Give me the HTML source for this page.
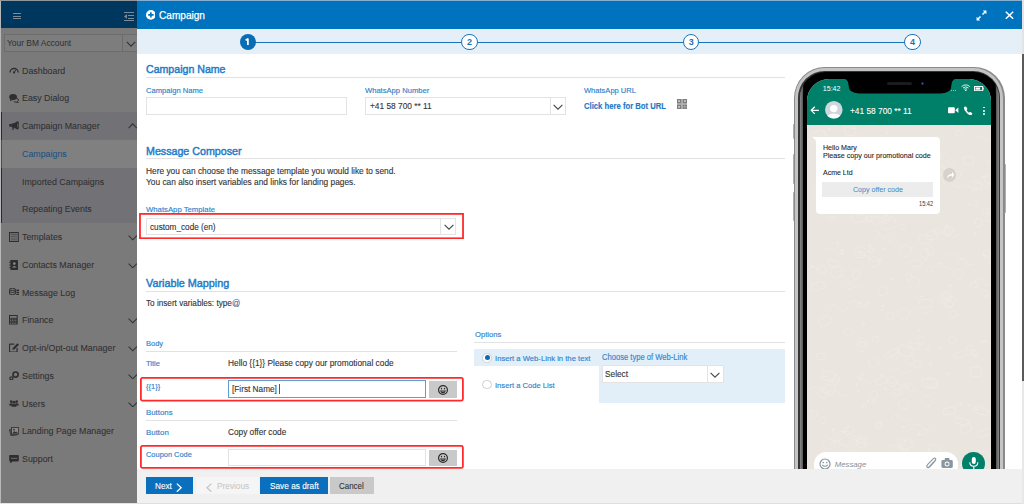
<!DOCTYPE html>
<html><head><meta charset="utf-8"><style>
html,body{margin:0;padding:0;width:1024px;height:504px;overflow:hidden;background:#fff}
.a{position:absolute;display:block}
.t{position:absolute;line-height:1;white-space:pre;font-family:"Liberation Sans",sans-serif}
</style></head><body>
<div class="a" style="left:0.00px;top:0.00px;width:1024.00px;height:504.00px;background:#ffffff"></div>
<div class="a" style="left:0.00px;top:0.00px;width:137.00px;height:504.00px;background:#7a7a7b"></div>
<div class="a" style="left:0.00px;top:1.00px;width:137.00px;height:27.30px;background:#00375e"></div>
<div class="a" style="left:13.00px;top:13.00px;width:8.00px;height:1.30px;background:#7b8a99"></div>
<div class="a" style="left:13.00px;top:15.60px;width:8.00px;height:1.30px;background:#7b8a99"></div>
<div class="a" style="left:13.00px;top:18.20px;width:8.00px;height:1.30px;background:#7b8a99"></div>
<div class="a" style="left:124.20px;top:12.00px;width:9.40px;height:1.20px;background:#7b8a99"></div>
<div class="a" style="left:127.50px;top:15.00px;width:6.10px;height:1.10px;background:#7b8a99"></div>
<div class="a" style="left:127.50px;top:17.50px;width:6.10px;height:1.10px;background:#7b8a99"></div>
<div class="a" style="left:124.20px;top:20.00px;width:9.40px;height:1.20px;background:#7b8a99"></div>
<svg class="a" style="left:123.80px;top:14.40px;" width="3.00" height="4.80" viewBox="0 0 3.00 4.80"><path d="M3 0 L0 2.4 L3 4.8 Z" fill="#7b8a99"/></svg>
<div class="a" style="left:3.60px;top:33.70px;width:136.40px;height:17.90px;background:#7d7d7e;border:1px solid #6c6c6d;box-sizing:border-box"></div>
<div class="a" style="left:122.00px;top:33.70px;width:1.00px;height:17.90px;background:#6c6c6d"></div>
<div class="t" style="left:7.10px;top:38.83px;font-size:8.841px;color:#2e2e2e;font-weight:400;transform:scaleX(0.9524);transform-origin:0 0;">Your BM Account</div>
<svg class="a" style="left:125.50px;top:40.50px;" width="10.00" height="6.50" viewBox="0 0 10.00 6.50"><path d="M0.8 0.8 L5 5.2 L9.2 0.8" stroke="#333" stroke-width="1.1" fill="none"/></svg>
<svg class="a" style="left:8.60px;top:67.40px;" width="10.00" height="6.60" viewBox="0 0 10.00 6.60"><path d="M1.0 5.6 A4.1 4.1 0 0 1 9.2 5.6" stroke="#2e2e30" stroke-width="1.3" fill="none"/><circle cx="5.1" cy="5.4" r="1.1" fill="#2e2e30"/><path d="M5.1 5.4 L6.9 3.0" stroke="#2e2e30" stroke-width="1"/></svg>
<div class="t" style="left:21.80px;top:66.60px;font-size:9.293px;color:#2f2f30;font-weight:400;transform:scaleX(0.9524);transform-origin:0 0;-webkit-text-stroke:0.06px #2f2f30">Dashboard</div>
<svg class="a" style="left:8.80px;top:94.00px;" width="10.40" height="8.60" viewBox="0 0 10.40 8.60"><path d="M7.4 4.2 Q9.4 4.6 9.4 6.2 Q9.4 7.3 8.5 7.7 L9.3 8.4 L7.0 8.1 Q5.6 8.2 4.8 7.4" fill="none" stroke="#2e2e30" stroke-width="1.0"/><ellipse cx="4.1" cy="3.1" rx="3.9" ry="3.0" fill="#2e2e30"/><path d="M1.4 5.0 L0.9 7.2 L3.6 5.9 Z" fill="#2e2e30"/></svg>
<div class="t" style="left:21.80px;top:93.60px;font-size:9.293px;color:#2f2f30;font-weight:400;transform:scaleX(0.9524);transform-origin:0 0;-webkit-text-stroke:0.06px #2f2f30">Easy Dialog</div>
<div class="a" style="left:0.00px;top:112.40px;width:137.00px;height:27.75px;background:#727276"></div>
<svg class="a" style="left:8.60px;top:121.00px;" width="10.40" height="9.20" viewBox="0 0 10.40 9.20"><rect x="0.2" y="3.0" width="2.0" height="2.6" fill="#2e2e30"/><path d="M2.2 2.7 Q5.5 2.2 8.2 0.5 V8.3 Q5.5 6.6 2.2 6.0 Z" fill="#2e2e30"/><ellipse cx="8.6" cy="4.4" rx="1.6" ry="4.1" fill="#2e2e30"/><ellipse cx="8.9" cy="4.4" rx="0.7" ry="2.6" fill="#55555a"/><path d="M3.3 6.0 L4.9 6.4 L4.5 9.0 L3.4 9.0 Z" fill="#2e2e30"/></svg>
<div class="t" style="left:21.80px;top:121.60px;font-size:9.293px;color:#2f2f30;font-weight:400;transform:scaleX(0.9524);transform-origin:0 0;-webkit-text-stroke:0.06px #2f2f30">Campaign Manager</div>
<svg class="a" style="left:127.50px;top:122.70px;" width="9.50" height="6.00" viewBox="0 0 9.50 6.00"><path d="M0.6 5.2 L4.75 0.9 L8.9 5.2" stroke="#333" stroke-width="1.1" fill="none"/></svg>
<div class="a" style="left:0.00px;top:140.15px;width:137.00px;height:27.75px;background:#808080"></div>
<div class="t" style="left:21.80px;top:149.60px;font-size:9.293px;color:#1b5283;font-weight:400;transform:scaleX(0.9524);transform-origin:0 0;-webkit-text-stroke:0.06px #1b5283">Campaigns</div>
<div class="a" style="left:0.00px;top:167.90px;width:137.00px;height:27.75px;background:#727276"></div>
<div class="t" style="left:21.80px;top:177.60px;font-size:9.293px;color:#2f2f30;font-weight:400;transform:scaleX(0.9524);transform-origin:0 0;-webkit-text-stroke:0.06px #2f2f30">Imported Campaigns</div>
<div class="a" style="left:0.00px;top:195.65px;width:137.00px;height:27.75px;background:#727276"></div>
<div class="t" style="left:21.80px;top:204.60px;font-size:9.293px;color:#2f2f30;font-weight:400;transform:scaleX(0.9524);transform-origin:0 0;-webkit-text-stroke:0.06px #2f2f30">Repeating Events</div>
<svg class="a" style="left:8.90px;top:232.00px;" width="9.80" height="10.00" viewBox="0 0 9.80 10.00"><rect x="0.5" y="0.5" width="8.8" height="9" fill="none" stroke="#2e2e30" stroke-width="1"/><g fill="#555"><rect x="1.6" y="1.6" width="6.6" height="1.6"/><rect x="1.6" y="3.9" width="6.6" height="1"/><rect x="1.6" y="5.6" width="6.6" height="1"/><rect x="1.6" y="7.3" width="6.6" height="1"/></g></svg>
<div class="t" style="left:21.80px;top:232.60px;font-size:9.293px;color:#2f2f30;font-weight:400;transform:scaleX(0.9524);transform-origin:0 0;-webkit-text-stroke:0.06px #2f2f30">Templates</div>
<svg class="a" style="left:127.50px;top:235.20px;" width="9.50" height="5.50" viewBox="0 0 9.50 5.50"><path d="M0.6 0.6 L4.75 4.8 L8.9 0.6" stroke="#333" stroke-width="1.1" fill="none"/></svg>
<svg class="a" style="left:9.20px;top:259.60px;" width="9.00" height="10.00" viewBox="0 0 9.00 10.00"><rect x="1.4" y="0" width="7.6" height="10" rx="0.6" fill="#2e2e30"/><rect x="0.2" y="1.8" width="2" height="0.9" fill="#2e2e30"/><rect x="0.2" y="4.5" width="2" height="0.9" fill="#2e2e30"/><rect x="0.2" y="7.2" width="2" height="0.9" fill="#2e2e30"/><circle cx="5.3" cy="3.6" r="1.3" fill="#8a8a8a"/><path d="M3 7.6 Q5.3 4.6 7.6 7.6 Z" fill="#8a8a8a"/></svg>
<div class="t" style="left:21.80px;top:260.60px;font-size:9.293px;color:#2f2f30;font-weight:400;transform:scaleX(0.9524);transform-origin:0 0;-webkit-text-stroke:0.06px #2f2f30">Contacts Manager</div>
<svg class="a" style="left:127.50px;top:262.95px;" width="9.50" height="5.50" viewBox="0 0 9.50 5.50"><path d="M0.6 0.6 L4.75 4.8 L8.9 0.6" stroke="#333" stroke-width="1.1" fill="none"/></svg>
<svg class="a" style="left:8.90px;top:288.00px;" width="10.30" height="7.40" viewBox="0 0 10.30 7.40"><ellipse cx="3.4" cy="1.3" rx="3" ry="1.1" fill="none" stroke="#2e2e30" stroke-width="1"/><path d="M0.4 1.3 V5.9 Q3.4 8 6.4 5.9 V1.3 M0.4 3.6 Q3.4 5.6 6.4 3.6" stroke="#2e2e30" stroke-width="1" fill="none"/><g fill="#2e2e30"><rect x="7.4" y="1.6" width="2.8" height="1.4"/><rect x="7.4" y="3.7" width="2.8" height="1.4"/><rect x="7.4" y="5.8" width="2.8" height="1.4"/></g></svg>
<div class="t" style="left:21.80px;top:288.60px;font-size:9.293px;color:#2f2f30;font-weight:400;transform:scaleX(0.9524);transform-origin:0 0;-webkit-text-stroke:0.06px #2f2f30">Message Log</div>
<svg class="a" style="left:9.30px;top:315.30px;" width="8.70" height="9.50" viewBox="0 0 8.70 9.50"><rect x="0" y="0" width="8.7" height="9.5" fill="#2e2e30"/><g fill="#7a7a7b"><rect x="1" y="1" width="6.7" height="1.8"/><rect x="1.00" y="3.60" width="1.1" height="0.8"/><rect x="2.75" y="3.60" width="1.1" height="0.8"/><rect x="4.50" y="3.60" width="1.1" height="0.8"/><rect x="6.25" y="3.60" width="1.1" height="0.8"/><rect x="1.00" y="5.10" width="1.1" height="0.8"/><rect x="2.75" y="5.10" width="1.1" height="0.8"/><rect x="4.50" y="5.10" width="1.1" height="0.8"/><rect x="6.25" y="5.10" width="1.1" height="0.8"/><rect x="1.00" y="6.60" width="1.1" height="0.8"/><rect x="2.75" y="6.60" width="1.1" height="0.8"/><rect x="4.50" y="6.60" width="1.1" height="0.8"/><rect x="6.25" y="6.60" width="1.1" height="0.8"/><rect x="1.00" y="8.10" width="1.1" height="0.8"/><rect x="2.75" y="8.10" width="1.1" height="0.8"/><rect x="4.50" y="8.10" width="1.1" height="0.8"/><rect x="6.25" y="8.10" width="1.1" height="0.8"/></g></svg>
<div class="t" style="left:21.80px;top:315.60px;font-size:9.293px;color:#2f2f30;font-weight:400;transform:scaleX(0.9524);transform-origin:0 0;-webkit-text-stroke:0.06px #2f2f30">Finance</div>
<svg class="a" style="left:127.50px;top:318.45px;" width="9.50" height="5.50" viewBox="0 0 9.50 5.50"><path d="M0.6 0.6 L4.75 4.8 L8.9 0.6" stroke="#333" stroke-width="1.1" fill="none"/></svg>
<svg class="a" style="left:8.90px;top:343.10px;" width="10.00" height="9.20" viewBox="0 0 10.00 9.20"><path d="M5.2 1.2 H1 Q0.5 1.2 0.5 1.7 V8.6 Q0.5 9.1 1 9.1 H7.6 Q8.1 9.1 8.1 8.6 V5" stroke="#2e2e30" stroke-width="1.2" fill="none"/><path d="M3.4 6.8 L3.7 4.9 L8.4 0.2 L10 1.8 L5.3 6.5 Z" fill="#2e2e30"/></svg>
<div class="t" style="left:21.80px;top:343.60px;font-size:9.293px;color:#2f2f30;font-weight:400;transform:scaleX(0.9524);transform-origin:0 0;-webkit-text-stroke:0.06px #2f2f30">Opt-in/Opt-out Manager</div>
<svg class="a" style="left:127.50px;top:346.20px;" width="9.50" height="5.50" viewBox="0 0 9.50 5.50"><path d="M0.6 0.6 L4.75 4.8 L8.9 0.6" stroke="#333" stroke-width="1.1" fill="none"/></svg>
<svg class="a" style="left:8.80px;top:371.20px;" width="10.20" height="9.20" viewBox="0 0 10.20 9.20"><circle cx="6.6" cy="3.6" r="2.6" fill="none" stroke="#2e2e30" stroke-width="1.6"/><circle cx="2.4" cy="7.4" r="1.5" fill="none" stroke="#2e2e30" stroke-width="1.2"/></svg>
<div class="t" style="left:21.80px;top:371.60px;font-size:9.293px;color:#2f2f30;font-weight:400;transform:scaleX(0.9524);transform-origin:0 0;-webkit-text-stroke:0.06px #2f2f30">Settings</div>
<svg class="a" style="left:127.50px;top:373.95px;" width="9.50" height="5.50" viewBox="0 0 9.50 5.50"><path d="M0.6 0.6 L4.75 4.8 L8.9 0.6" stroke="#333" stroke-width="1.1" fill="none"/></svg>
<svg class="a" style="left:9.00px;top:400.20px;" width="9.90" height="6.70" viewBox="0 0 9.90 6.70"><g fill="#2e2e30"><circle cx="2.2" cy="1.6" r="1.3"/><circle cx="7.7" cy="1.6" r="1.3"/><circle cx="4.95" cy="2.2" r="1.5"/><path d="M0 5.4 Q0 3.2 2.2 3.2 Q3.6 3.2 3.8 4 L3.6 5.4 Z"/><path d="M9.9 5.4 Q9.9 3.2 7.7 3.2 Q6.3 3.2 6.1 4 L6.3 5.4 Z"/><path d="M2.4 6.7 Q2.4 4 4.95 4 Q7.5 4 7.5 6.7 Z"/></g></svg>
<div class="t" style="left:21.80px;top:399.60px;font-size:9.293px;color:#2f2f30;font-weight:400;transform:scaleX(0.9524);transform-origin:0 0;-webkit-text-stroke:0.06px #2f2f30">Users</div>
<svg class="a" style="left:127.50px;top:401.70px;" width="9.50" height="5.50" viewBox="0 0 9.50 5.50"><path d="M0.6 0.6 L4.75 4.8 L8.9 0.6" stroke="#333" stroke-width="1.1" fill="none"/></svg>
<svg class="a" style="left:9.00px;top:426.90px;" width="9.90" height="8.90" viewBox="0 0 9.90 8.90"><path d="M0.4 2.8 L6.6 1.5 L8.2 7.8 L2 9 Z" fill="#555" stroke="#2e2e30" stroke-width="0.7"/><rect x="2.6" y="0.4" width="7" height="6.8" fill="#8a8a8a" stroke="#2e2e30" stroke-width="0.8"/><circle cx="5" cy="2.6" r="0.9" fill="#2e2e30"/><path d="M3.2 6.6 L5.4 4 L6.6 5.2 L7.4 4.5 L9 6.6 Z" fill="#2e2e30"/></svg>
<div class="t" style="left:21.80px;top:426.60px;font-size:9.293px;color:#2f2f30;font-weight:400;transform:scaleX(0.9524);transform-origin:0 0;-webkit-text-stroke:0.06px #2f2f30">Landing Page Manager</div>
<svg class="a" style="left:9.00px;top:454.50px;" width="9.90" height="8.70" viewBox="0 0 9.90 8.70"><path d="M0.2 0.8 Q0.2 0 1 0 H9 Q9.8 0 9.8 0.8 V5.6 Q9.8 6.4 9 6.4 H3.6 L1.2 8.6 V6.4 H1 Q0.2 6.4 0.2 5.6 Z" fill="#2e2e30"/><g fill="#8a8a8a"><rect x="2.4" y="2.8" width="1.3" height="1.1"/><rect x="4.4" y="2.8" width="1.3" height="1.1"/><rect x="6.4" y="2.8" width="1.3" height="1.1"/></g></svg>
<div class="t" style="left:21.80px;top:454.60px;font-size:9.293px;color:#2f2f30;font-weight:400;transform:scaleX(0.9524);transform-origin:0 0;-webkit-text-stroke:0.06px #2f2f30">Support</div>
<div class="a" style="left:0.50px;top:112.40px;width:1.00px;height:111.00px;background:#2a2a2b"></div>
<div class="a" style="left:0.50px;top:140.15px;width:1.00px;height:27.75px;background:#1d5a8a"></div>
<div class="a" style="left:0.00px;top:0.00px;width:1.00px;height:504.00px;background:#b8b8b8"></div>
<div class="a" style="left:0.00px;top:503.00px;width:1024.00px;height:1.00px;background:#e3e3e3"></div>
<div class="a" style="left:137.00px;top:1.00px;width:885.00px;height:27.80px;background:#0073bf"></div>
<div class="a" style="left:137.00px;top:0.00px;width:885.00px;height:1.00px;background:#85aed0"></div>
<div class="a" style="left:0.00px;top:0.00px;width:137.00px;height:1.00px;background:#8f969c"></div>
<svg class="a" style="left:145.60px;top:10.10px;" width="9.80" height="9.80" viewBox="0 0 9.80 9.80"><circle cx="4.9" cy="4.9" r="4.9" fill="#fff"/><path d="M4.9 2.2 V7.6 M2.2 4.9 H7.6" stroke="#0073bf" stroke-width="1.6"/></svg>
<div class="t" style="left:158.70px;top:10.55px;font-size:10.403px;color:#ffffff;font-weight:400;transform:scaleX(0.9709);transform-origin:0 0;-webkit-text-stroke:0.25px #fff">Campaign</div>
<svg class="a" style="left:975.50px;top:10.00px;" width="11.50" height="10.50" viewBox="0 0 11.50 10.50"><path d="M6.5 4.5 L9.8 1.2 M1.2 9.8 L4.5 6.5" stroke="#fff" stroke-width="1.5"/><path d="M6.8 0.6 H10.4 V4.2 Z M0.6 6.8 V10.4 H4.2 Z" fill="#fff"/></svg>
<svg class="a" style="left:1005.00px;top:10.80px;" width="9.00" height="8.60" viewBox="0 0 9.00 8.60"><path d="M0.8 0.8 L8.2 7.8 M8.2 0.8 L0.8 7.8" stroke="#fff" stroke-width="1.5"/></svg>
<div class="a" style="left:137.00px;top:28.80px;width:885.00px;height:25.20px;background:#e4eff8"></div>
<div class="a" style="left:248.00px;top:41.50px;width:664.00px;height:1.50px;background:#1a73bb"></div>
<div class="a" style="left:239.50px;top:33.50px;width:16.60px;height:16.60px;background:#0a6cb5;border-radius:50%"></div>
<svg class="a" style="left:244.80px;top:37.60px;" width="5.00" height="7.60" viewBox="0 0 5.00 7.60"><path d="M2.9 0.4 V7.6 M3.4 0.7 L0.6 2.2" stroke="#fff" stroke-width="1.7" fill="none"/></svg>
<div class="a" style="left:461.20px;top:33.50px;width:16.60px;height:16.60px;background:#fff;border:1.5px solid #1a73bb;border-radius:50%;box-sizing:border-box"></div>
<div class="t" style="left:466.30px;top:37.75px;font-size:9.000px;color:#1a73bb;font-weight:700;width:6.4px;text-align:center">2</div>
<div class="a" style="left:682.90px;top:33.50px;width:16.60px;height:16.60px;background:#fff;border:1.5px solid #1a73bb;border-radius:50%;box-sizing:border-box"></div>
<div class="t" style="left:688.00px;top:37.75px;font-size:9.000px;color:#1a73bb;font-weight:700;width:6.4px;text-align:center">3</div>
<div class="a" style="left:904.20px;top:33.50px;width:16.60px;height:16.60px;background:#fff;border:1.5px solid #1a73bb;border-radius:50%;box-sizing:border-box"></div>
<div class="t" style="left:909.30px;top:37.75px;font-size:9.000px;color:#1a73bb;font-weight:700;width:6.4px;text-align:center">4</div>
<div class="t" style="left:145.80px;top:63.85px;font-size:10.800px;color:#1f7cc8;font-weight:400;transform:scaleX(0.9813);transform-origin:0 0;-webkit-text-stroke:0.45px #1f7cc8">Campaign Name</div>
<div class="a" style="left:146.00px;top:77.20px;width:639.30px;height:1.00px;background:#e2e2e2"></div>
<div class="t" style="left:146.00px;top:86.87px;font-size:7.752px;color:#2f83cc;font-weight:400;transform:scaleX(0.9804);transform-origin:0 0;-webkit-text-stroke:0.15px #2f83cc">Campaign Name</div>
<div class="t" style="left:365.00px;top:86.87px;font-size:7.752px;color:#2f83cc;font-weight:400;transform:scaleX(0.9804);transform-origin:0 0;-webkit-text-stroke:0.15px #2f83cc">WhatsApp Number</div>
<div class="t" style="left:584.00px;top:86.90px;font-size:7.701px;color:#2f83cc;font-weight:400;transform:scaleX(0.9804);transform-origin:0 0;-webkit-text-stroke:0.15px #2f83cc">WhatsApp URL</div>
<div class="a" style="left:146.00px;top:97.40px;width:201.00px;height:17.30px;border:1px solid #e3e3e3;box-sizing:border-box"></div>
<div class="a" style="left:365.00px;top:97.40px;width:201.00px;height:17.30px;border:1px solid #e3e3e3;box-sizing:border-box"></div>
<div class="a" style="left:549.50px;top:97.40px;width:1.00px;height:17.30px;background:#e3e3e3"></div>
<svg class="a" style="left:552.50px;top:103.80px;" width="10.00" height="6.20" viewBox="0 0 10.00 6.20"><path d="M0.6 0.8 L5 5.2 L9.4 0.8" stroke="#4a4a4a" stroke-width="1.15" fill="none"/></svg>
<div class="t" style="left:370.00px;top:101.67px;font-size:9.163px;color:#333333;font-weight:400;transform:scaleX(0.9091);transform-origin:0 0;-webkit-text-stroke:0.12px #333">+41 58 700 ** 11</div>
<div class="t" style="left:584.00px;top:100.94px;font-size:9.613px;color:#1a78c8;font-weight:700;transform:scaleX(0.8000);transform-origin:0 0;-webkit-text-stroke:0.15px #1a78c8">Click here for Bot URL</div>
<svg class="a" style="left:677.00px;top:99.00px;" width="10.00" height="10.00" viewBox="0 0 10.00 10.00"><rect x="0" y="0" width="10" height="10" fill="#b4b4b4"/><g fill="#7e7e7e"><rect x="0" y="0" width="4.2" height="4.2"/><rect x="5.8" y="0" width="4.2" height="4.2"/><rect x="0" y="5.8" width="4.2" height="4.2"/><rect x="5.8" y="5.8" width="1.8" height="1.8"/><rect x="8.2" y="8.2" width="1.8" height="1.8"/><rect x="5.8" y="8.2" width="1.8" height="1.8"/><rect x="8.2" y="5.8" width="1.8" height="1.8"/></g><g fill="#c8c8c8"><rect x="1.2" y="1.2" width="1.8" height="1.8"/><rect x="7" y="1.2" width="1.8" height="1.8"/><rect x="1.2" y="7" width="1.8" height="1.8"/></g></svg>
<div class="t" style="left:145.80px;top:145.85px;font-size:10.800px;color:#1f7cc8;font-weight:400;transform:scaleX(0.9884);transform-origin:0 0;-webkit-text-stroke:0.45px #1f7cc8">Message Composer</div>
<div class="a" style="left:146.00px;top:158.30px;width:639.30px;height:1.00px;background:#e2e2e2"></div>
<div class="t" style="left:145.50px;top:166.87px;font-size:8.757px;color:#333333;font-weight:400;transform:scaleX(0.9524);transform-origin:0 0;-webkit-text-stroke:0.12px #333">Here you can choose the message template you would like to send.</div>
<div class="t" style="left:145.50px;top:177.87px;font-size:8.757px;color:#333333;font-weight:400;transform:scaleX(0.9524);transform-origin:0 0;-webkit-text-stroke:0.12px #333">You can also insert variables and links for landing pages.</div>
<div class="t" style="left:146.00px;top:205.80px;font-size:7.905px;color:#2f83cc;font-weight:400;transform:scaleX(0.9804);transform-origin:0 0;-webkit-text-stroke:0.15px #2f83cc">WhatsApp Template</div>
<svg class="a" style="left:139.00px;top:213.00px;" width="325.00" height="26.20" viewBox="0 0 325.00 26.20"><rect x="0.9" y="0.9" width="323.20" height="24.40" rx="0" fill="none" stroke="#ff2b2b" stroke-width="1.8"/></svg>
<div class="a" style="left:146.20px;top:218.10px;width:310.20px;height:17.40px;border:1px solid #e3e3e3;box-sizing:border-box"></div>
<div class="a" style="left:440.40px;top:218.10px;width:1.00px;height:17.40px;background:#e3e3e3"></div>
<svg class="a" style="left:443.50px;top:224.20px;" width="10.00" height="6.30" viewBox="0 0 10.00 6.30"><path d="M0.6 0.8 L5 5.2 L9.4 0.8" stroke="#4a4a4a" stroke-width="1.15" fill="none"/></svg>
<div class="t" style="left:149.60px;top:222.74px;font-size:9.020px;color:#333333;font-weight:400;transform:scaleX(0.9091);transform-origin:0 0;-webkit-text-stroke:0.12px #333">custom_code (en)</div>
<div class="t" style="left:145.80px;top:277.85px;font-size:10.800px;color:#1f7cc8;font-weight:400;transform:scaleX(0.9996);transform-origin:0 0;-webkit-text-stroke:0.45px #1f7cc8">Variable Mapping</div>
<div class="a" style="left:146.00px;top:290.70px;width:639.30px;height:1.00px;background:#e2e2e2"></div>
<div class="t" style="left:146.40px;top:298.83px;font-size:8.845px;color:#333333;font-weight:400;transform:scaleX(0.9259);transform-origin:0 0;-webkit-text-stroke:0.12px #333">To insert variables: type<span style="color:#3b8dd3">@</span></div>
<div class="t" style="left:146.00px;top:339.93px;font-size:7.650px;color:#2f83cc;font-weight:400;transform:scaleX(0.9804);transform-origin:0 0;-webkit-text-stroke:0.15px #2f83cc">Body</div>
<div class="a" style="left:146.00px;top:351.00px;width:310.60px;height:1.00px;background:#e2e2e2"></div>
<div class="t" style="left:146.00px;top:359.93px;font-size:7.650px;color:#2f83cc;font-weight:400;transform:scaleX(0.9804);transform-origin:0 0;-webkit-text-stroke:0.15px #2f83cc">Title</div>
<div class="t" style="left:227.90px;top:358.74px;font-size:9.029px;color:#333333;font-weight:400;transform:scaleX(0.9259);transform-origin:0 0;-webkit-text-stroke:0.12px #333">Hello {{1}} Please copy our promotional code</div>
<svg class="a" style="left:140.40px;top:377.00px;" width="323.80" height="24.50" viewBox="0 0 323.80 24.50"><rect x="0.9" y="0.9" width="322.00" height="22.70" rx="1.5" fill="none" stroke="#ff2b2b" stroke-width="1.8"/></svg>
<div class="t" style="left:146.00px;top:382.93px;font-size:7.650px;color:#2f83cc;font-weight:400;transform:scaleX(0.9804);transform-origin:0 0;-webkit-text-stroke:0.15px #2f83cc">{{1}}</div>
<div class="a" style="left:228.20px;top:380.20px;width:198.30px;height:17.60px;border:1px solid #5b9fd6;box-sizing:border-box"></div>
<div class="t" style="left:231.70px;top:384.79px;font-size:8.921px;color:#333333;font-weight:400;transform:scaleX(0.9259);transform-origin:0 0;-webkit-text-stroke:0.12px #333">[First Name]</div>
<div class="a" style="left:279.00px;top:384.00px;width:1.00px;height:10.00px;background:#5a5a5a"></div>
<div class="a" style="left:428.50px;top:380.50px;width:28.40px;height:17.50px;background:#c9c9c9"></div>
<svg class="a" style="left:436.80px;top:384.00px;" width="12.00" height="12.00" viewBox="0 0 12.00 12.00"><circle cx="6" cy="6" r="4.4" fill="none" stroke="#2a2a2a" stroke-width="1.2"/><ellipse cx="4.5" cy="4.6" rx="0.65" ry="0.95" fill="#2a2a2a"/><ellipse cx="7.5" cy="4.6" rx="0.65" ry="0.95" fill="#2a2a2a"/><path d="M3.2 6.2 Q6 6.8 8.8 6.2 Q8.4 9.2 6 9.2 Q3.6 9.2 3.2 6.2 Z" fill="#2a2a2a"/><path d="M4.2 6.7 Q6 7.1 7.8 6.7 L7.6 7.3 Q6 7.6 4.4 7.3 Z" fill="#c9c9c9"/></svg>
<div class="t" style="left:146.00px;top:408.74px;font-size:8.027px;color:#2f83cc;font-weight:400;transform:scaleX(0.9804);transform-origin:0 0;-webkit-text-stroke:0.15px #2f83cc">Buttons</div>
<div class="a" style="left:146.00px;top:420.00px;width:310.90px;height:1.00px;background:#e2e2e2"></div>
<div class="t" style="left:146.00px;top:428.72px;font-size:8.058px;color:#2f83cc;font-weight:400;transform:scaleX(0.9804);transform-origin:0 0;-webkit-text-stroke:0.15px #2f83cc">Button</div>
<div class="t" style="left:227.90px;top:427.77px;font-size:8.953px;color:#333333;font-weight:400;transform:scaleX(0.9259);transform-origin:0 0;-webkit-text-stroke:0.12px #333">Copy offer code</div>
<svg class="a" style="left:140.40px;top:445.20px;" width="323.80" height="23.80" viewBox="0 0 323.80 23.80"><rect x="0.9" y="0.9" width="322.00" height="22.00" rx="1.5" fill="none" stroke="#ff2b2b" stroke-width="1.8"/></svg>
<div class="t" style="left:146.00px;top:450.95px;font-size:7.599px;color:#2f83cc;font-weight:400;transform:scaleX(0.9804);transform-origin:0 0;-webkit-text-stroke:0.15px #2f83cc">Coupon Code</div>
<div class="a" style="left:228.10px;top:449.30px;width:198.40px;height:17.20px;border:1px solid #e3e3e3;box-sizing:border-box"></div>
<div class="a" style="left:428.50px;top:449.70px;width:28.40px;height:16.80px;background:#c9c9c9"></div>
<svg class="a" style="left:436.80px;top:452.40px;" width="12.00" height="12.00" viewBox="0 0 12.00 12.00"><circle cx="6" cy="6" r="4.4" fill="none" stroke="#2a2a2a" stroke-width="1.2"/><ellipse cx="4.5" cy="4.6" rx="0.65" ry="0.95" fill="#2a2a2a"/><ellipse cx="7.5" cy="4.6" rx="0.65" ry="0.95" fill="#2a2a2a"/><path d="M3.2 6.2 Q6 6.8 8.8 6.2 Q8.4 9.2 6 9.2 Q3.6 9.2 3.2 6.2 Z" fill="#2a2a2a"/><path d="M4.2 6.7 Q6 7.1 7.8 6.7 L7.6 7.3 Q6 7.6 4.4 7.3 Z" fill="#c9c9c9"/></svg>
<div class="t" style="left:474.80px;top:330.87px;font-size:7.752px;color:#2f83cc;font-weight:400;transform:scaleX(0.9804);transform-origin:0 0;-webkit-text-stroke:0.15px #2f83cc">Options</div>
<div class="a" style="left:474.30px;top:342.20px;width:310.70px;height:1.00px;background:#e2e2e2"></div>
<div class="a" style="left:474.30px;top:349.00px;width:124.70px;height:17.40px;background:#e3eff8"></div>
<div class="a" style="left:599.00px;top:349.00px;width:186.20px;height:53.80px;background:#e3eff8"></div>
<div class="a" style="left:482.35px;top:353.25px;width:9.30px;height:9.30px;background:#fff;border:1px solid #cfcfcf;border-radius:50%;box-sizing:border-box"></div>
<div class="a" style="left:484.50px;top:355.40px;width:5.00px;height:5.00px;background:#0a6cb5;border-radius:50%"></div>
<div class="t" style="left:494.50px;top:354.83px;font-size:7.834px;color:#2f83cc;font-weight:400;transform:scaleX(0.9804);transform-origin:0 0;-webkit-text-stroke:0.15px #2f83cc">Insert a Web-Link in the text</div>
<div class="a" style="left:482.35px;top:379.95px;width:9.30px;height:9.30px;background:#fff;border:1px solid #cfcfcf;border-radius:50%;box-sizing:border-box"></div>
<div class="t" style="left:494.50px;top:381.86px;font-size:7.783px;color:#2f83cc;font-weight:400;transform:scaleX(0.9804);transform-origin:0 0;-webkit-text-stroke:0.15px #2f83cc">Insert a Code List</div>
<div class="t" style="left:601.70px;top:352.99px;font-size:8.523px;color:#2f83cc;font-weight:400;transform:scaleX(0.8929);transform-origin:0 0;-webkit-text-stroke:0.15px #3b8dd3">Choose type of Web-Link</div>
<div class="a" style="left:601.70px;top:365.30px;width:122.00px;height:17.40px;background:#fff;border:1px solid #e3e3e3;box-sizing:border-box"></div>
<div class="a" style="left:706.50px;top:365.30px;width:1.00px;height:17.40px;background:#e3e3e3"></div>
<svg class="a" style="left:709.50px;top:371.50px;" width="10.00" height="6.00" viewBox="0 0 10.00 6.00"><path d="M0.6 0.8 L5 5.2 L9.4 0.8" stroke="#4a4a4a" stroke-width="1.15" fill="none"/></svg>
<div class="t" style="left:605.40px;top:369.69px;font-size:9.130px;color:#333333;font-weight:400;transform:scaleX(0.9091);transform-origin:0 0;-webkit-text-stroke:0.12px #333">Select</div>
<div class="a" style="left:792.80px;top:123.90px;width:3.20px;height:15.30px;background:linear-gradient(90deg,#bdbdbd,#6d6d6d);border-radius:1px"></div>
<div class="a" style="left:792.80px;top:154.40px;width:3.20px;height:29.20px;background:linear-gradient(90deg,#bdbdbd,#6d6d6d);border-radius:1px"></div>
<div class="a" style="left:792.80px;top:192.00px;width:3.20px;height:29.00px;background:linear-gradient(90deg,#bdbdbd,#6d6d6d);border-radius:1px"></div>
<div class="a" style="left:1002.50px;top:164.00px;width:3.00px;height:48.80px;background:linear-gradient(90deg,#6d6d6d,#bdbdbd);border-radius:1px"></div>
<div class="a" style="left:794.00px;top:66.80px;width:210.60px;height:513.20px;background:#8a8a8a;border-radius:31.00px"></div>
<div class="a" style="left:795.20px;top:68.00px;width:208.20px;height:512.00px;background:#c4c4c4;border-radius:29.80px"></div>
<div class="a" style="left:798.20px;top:71.00px;width:202.20px;height:509.00px;background:#353535;border-radius:26.80px"></div>
<div class="a" style="left:799.60px;top:72.40px;width:199.40px;height:507.60px;background:linear-gradient(90deg,#8a8a8a 0,#555 3px,#000 3.6px,#000 calc(100% - 3.6px),#555 calc(100% - 3px),#8a8a8a 100%);border-radius:25.4px"></div>
<div class="a" style="left:803.00px;top:75.80px;width:192.60px;height:504.20px;background:#000000;border-radius:22.00px"></div>
<div class="a" style="left:807.30px;top:78.70px;width:184.10px;height:501.30px;background:#eae5de;border-radius:22px"></div>
<svg class="a" style="left:807.30px;top:124.80px;" width="184.10" height="344.20" viewBox="0 0 184.10 344.20"><g fill="none" stroke="#efebe5" stroke-width="0.8"><circle cx="59.6" cy="52.0" r="2.3"/><circle cx="98.6" cy="126.2" r="5.6"/><circle cx="39.5" cy="29.7" r="0.9" fill="#efebe5"/><circle cx="12.9" cy="31.3" r="0.9" fill="#efebe5"/><rect x="10.9" y="195.1" width="12.3" height="7.9" rx="2" transform="rotate(-26 10.9 195.1)"/><rect x="107.7" y="17.1" width="6.5" height="9.3" rx="2" transform="rotate(-13 107.7 17.1)"/><path d="M26.5 40.6 q5 -6 10 0 t10 0"/><circle cx="103.1" cy="235.3" r="4.3"/><circle cx="117.6" cy="128.5" r="4.3"/><circle cx="113.9" cy="171.3" r="0.9" fill="#efebe5"/><circle cx="143.0" cy="160.6" r="0.9" fill="#efebe5"/><rect x="66.5" y="85.7" width="13.0" height="6.2" rx="2" transform="rotate(4 66.5 85.7)"/><circle cx="96.6" cy="301.9" r="0.9" fill="#efebe5"/><circle cx="53.0" cy="338.2" r="4.0"/><circle cx="30.4" cy="118.0" r="0.9" fill="#efebe5"/><circle cx="77.6" cy="331.9" r="5.1"/><path d="M105.4 302.0 q5 -6 10 0 t10 0"/><circle cx="62.6" cy="120.8" r="0.9" fill="#efebe5"/><circle cx="106.7" cy="157.4" r="5.8"/><circle cx="87.2" cy="229.1" r="4.9"/><circle cx="57.0" cy="199.4" r="0.9" fill="#efebe5"/><path d="M52.4 133.1 q5 -6 10 0 t10 0"/><rect x="4.2" y="159.3" width="12.1" height="7.5" rx="2" transform="rotate(-17 4.2 159.3)"/><circle cx="52.9" cy="254.7" r="0.9" fill="#efebe5"/><circle cx="71.9" cy="300.6" r="2.7"/><rect x="73.9" y="95.9" width="14.2" height="9.3" rx="2" transform="rotate(-13 73.9 95.9)"/><circle cx="76.4" cy="123.8" r="0.9" fill="#efebe5"/><rect x="176.2" y="52.1" width="7.5" height="8.3" rx="2" transform="rotate(-29 176.2 52.1)"/><path d="M152.9 62.9 q5 -6 10 0 t10 0"/><path d="M0.8 144.5 q5 -6 10 0 t10 0"/><rect x="112.2" y="109.9" width="12.9" height="7.6" rx="2" transform="rotate(7 112.2 109.9)"/><circle cx="124.4" cy="18.6" r="0.9" fill="#efebe5"/><circle cx="73.2" cy="136.0" r="0.9" fill="#efebe5"/><circle cx="116.7" cy="21.5" r="5.9"/><circle cx="81.1" cy="37.9" r="2.4"/><path d="M104.3 185.1 q5 -6 10 0 t10 0"/><rect x="112.9" y="24.3" width="12.1" height="5.7" rx="2" transform="rotate(-15 112.9 24.3)"/><circle cx="63.9" cy="125.6" r="2.5"/><circle cx="89.8" cy="337.3" r="0.9" fill="#efebe5"/><circle cx="89.0" cy="29.6" r="5.0"/><rect x="136.2" y="165.1" width="11.2" height="6.0" rx="2" transform="rotate(27 136.2 165.1)"/><circle cx="66.6" cy="238.1" r="5.0"/><circle cx="54.8" cy="221.8" r="4.8"/><rect x="48.0" y="126.5" width="9.6" height="6.1" rx="2" transform="rotate(2 48.0 126.5)"/><rect x="92.5" y="219.6" width="14.1" height="9.1" rx="2" transform="rotate(14 92.5 219.6)"/><path d="M41.7 178.6 q5 -6 10 0 t10 0"/><path d="M134.5 341.4 q5 -6 10 0 t10 0"/><path d="M86.9 66.8 q5 -6 10 0 t10 0"/><path d="M82.3 323.3 q5 -6 10 0 t10 0"/><rect x="175.7" y="125.8" width="7.0" height="7.4" rx="2" transform="rotate(-10 175.7 125.8)"/><circle cx="88.8" cy="339.9" r="3.9"/><circle cx="120.1" cy="275.9" r="5.3"/><rect x="22.1" y="134.0" width="10.8" height="5.9" rx="2" transform="rotate(17 22.1 134.0)"/><circle cx="61.2" cy="276.3" r="0.9" fill="#efebe5"/><circle cx="85.2" cy="256.5" r="4.9"/><rect x="31.3" y="43.8" width="11.9" height="7.3" rx="2" transform="rotate(9 31.3 43.8)"/><circle cx="112.5" cy="205.6" r="0.9" fill="#efebe5"/><rect x="120.9" y="120.9" width="6.2" height="9.0" rx="2" transform="rotate(14 120.9 120.9)"/><rect x="18.9" y="258.6" width="10.3" height="9.4" rx="2" transform="rotate(20 18.9 258.6)"/><path d="M38.8 86.9 q5 -6 10 0 t10 0"/><path d="M92.2 263.5 q5 -6 10 0 t10 0"/><rect x="47.7" y="144.6" width="6.6" height="8.7" rx="2" transform="rotate(24 47.7 144.6)"/><circle cx="121.9" cy="281.2" r="0.9" fill="#efebe5"/><rect x="152.2" y="303.0" width="11.3" height="7.6" rx="2" transform="rotate(-29 152.2 303.0)"/><circle cx="81.0" cy="63.2" r="5.1"/><circle cx="27.6" cy="48.8" r="4.2"/><circle cx="60.0" cy="178.8" r="0.9" fill="#efebe5"/><circle cx="144.3" cy="36.6" r="3.0"/><circle cx="51.0" cy="266.4" r="0.9" fill="#efebe5"/><circle cx="103.4" cy="262.2" r="3.8"/><rect x="112.7" y="174.4" width="12.9" height="7.3" rx="2" transform="rotate(2 112.7 174.4)"/><path d="M88.0 324.8 q5 -6 10 0 t10 0"/><rect x="169.8" y="308.0" width="14.4" height="5.7" rx="2" transform="rotate(-23 169.8 308.0)"/><rect x="81.3" y="25.0" width="10.3" height="6.1" rx="2" transform="rotate(-12 81.3 25.0)"/><path d="M22.5 268.0 q5 -6 10 0 t10 0"/><circle cx="26.3" cy="304.6" r="0.9" fill="#efebe5"/><circle cx="40.4" cy="328.6" r="0.9" fill="#efebe5"/><rect x="162.8" y="56.2" width="7.6" height="7.2" rx="2" transform="rotate(1 162.8 56.2)"/><path d="M62.4 67.5 q5 -6 10 0 t10 0"/><path d="M17.0 126.3 q5 -6 10 0 t10 0"/><circle cx="101.9" cy="152.0" r="3.5"/><circle cx="95.2" cy="101.9" r="2.5"/><circle cx="169.0" cy="78.9" r="2.3"/><rect x="50.0" y="312.5" width="8.7" height="5.6" rx="2" transform="rotate(-5 50.0 312.5)"/><path d="M167.7 282.5 q5 -6 10 0 t10 0"/><circle cx="74.7" cy="185.1" r="0.9" fill="#efebe5"/><circle cx="128.9" cy="30.9" r="5.2"/><path d="M33.7 308.9 q5 -6 10 0 t10 0"/><path d="M172.7 218.9 q5 -6 10 0 t10 0"/><circle cx="15.4" cy="295.4" r="3.1"/><circle cx="22.4" cy="4.0" r="0.9" fill="#efebe5"/><rect x="170.5" y="92.4" width="6.4" height="8.5" rx="2" transform="rotate(26 170.5 92.4)"/><rect x="178.3" y="90.4" width="8.0" height="6.6" rx="2" transform="rotate(-12 178.3 90.4)"/><rect x="139.7" y="100.0" width="8.7" height="9.0" rx="2" transform="rotate(30 139.7 100.0)"/><rect x="6.8" y="6.4" width="11.1" height="6.2" rx="2" transform="rotate(-3 6.8 6.4)"/><circle cx="121.1" cy="224.3" r="0.9" fill="#efebe5"/><path d="M100.4 306.6 q5 -6 10 0 t10 0"/><path d="M126.5 338.9 q5 -6 10 0 t10 0"/><rect x="36.5" y="304.3" width="10.0" height="6.7" rx="2" transform="rotate(-27 36.5 304.3)"/><path d="M23.9 24.4 q5 -6 10 0 t10 0"/><circle cx="79.3" cy="19.1" r="0.9" fill="#efebe5"/><path d="M160.2 231.3 q5 -6 10 0 t10 0"/><circle cx="110.2" cy="239.0" r="3.8"/><path d="M29.0 153.8 q5 -6 10 0 t10 0"/><path d="M67.0 113.5 q5 -6 10 0 t10 0"/><path d="M45.0 333.2 q5 -6 10 0 t10 0"/><path d="M40.1 63.1 q5 -6 10 0 t10 0"/><rect x="70.2" y="163.8" width="8.5" height="8.9" rx="2" transform="rotate(-25 70.2 163.8)"/><circle cx="150.3" cy="49.6" r="3.6"/><circle cx="55.1" cy="217.2" r="4.3"/><circle cx="97.4" cy="258.9" r="0.9" fill="#efebe5"/><circle cx="140.6" cy="248.6" r="0.9" fill="#efebe5"/><rect x="27.5" y="249.8" width="6.4" height="9.2" rx="2" transform="rotate(24 27.5 249.8)"/><rect x="115.4" y="253.2" width="15.1" height="8.8" rx="2" transform="rotate(4 115.4 253.2)"/><rect x="149.6" y="5.5" width="6.9" height="5.2" rx="2" transform="rotate(8 149.6 5.5)"/><circle cx="176.6" cy="129.9" r="0.9" fill="#efebe5"/><rect x="102.8" y="216.6" width="10.9" height="5.0" rx="2" transform="rotate(18 102.8 216.6)"/><circle cx="137.7" cy="173.5" r="4.6"/><path d="M12.2 254.2 q5 -6 10 0 t10 0"/><rect x="148.9" y="291.9" width="13.3" height="6.0" rx="2" transform="rotate(14 148.9 291.9)"/><circle cx="179.5" cy="170.4" r="0.9" fill="#efebe5"/><path d="M14.1 314.1 q5 -6 10 0 t10 0"/><rect x="141.1" y="212.9" width="6.8" height="5.7" rx="2" transform="rotate(-15 141.1 212.9)"/><rect x="136.8" y="105.0" width="6.1" height="5.3" rx="2" transform="rotate(-14 136.8 105.0)"/><circle cx="123.6" cy="238.8" r="0.9" fill="#efebe5"/><circle cx="53.5" cy="178.2" r="0.9" fill="#efebe5"/><rect x="85.7" y="264.7" width="9.1" height="5.4" rx="2" transform="rotate(-2 85.7 264.7)"/><circle cx="53.3" cy="26.4" r="0.9" fill="#efebe5"/><rect x="182.9" y="133.5" width="6.7" height="5.5" rx="2" transform="rotate(15 182.9 133.5)"/><path d="M48.2 124.0 q5 -6 10 0 t10 0"/><rect x="163.2" y="242.7" width="11.0" height="9.4" rx="2" transform="rotate(-6 163.2 242.7)"/><circle cx="29.3" cy="327.7" r="0.9" fill="#efebe5"/><circle cx="74.6" cy="250.9" r="0.9" fill="#efebe5"/><path d="M63.3 109.0 q5 -6 10 0 t10 0"/><circle cx="0.3" cy="259.0" r="0.9" fill="#efebe5"/><circle cx="22.1" cy="319.6" r="5.6"/><circle cx="53.3" cy="128.4" r="0.9" fill="#efebe5"/><circle cx="71.8" cy="300.1" r="3.4"/><circle cx="78.8" cy="94.9" r="3.1"/><rect x="9.5" y="228.4" width="8.5" height="6.3" rx="2" transform="rotate(1 9.5 228.4)"/><circle cx="34.9" cy="128.8" r="0.9" fill="#efebe5"/><circle cx="162.7" cy="280.1" r="0.9" fill="#efebe5"/><rect x="168.1" y="324.5" width="13.2" height="5.2" rx="2" transform="rotate(14 168.1 324.5)"/><path d="M83.0 259.7 q5 -6 10 0 t10 0"/><rect x="89.3" y="314.6" width="7.7" height="7.1" rx="2" transform="rotate(-13 89.3 314.6)"/><path d="M47.1 254.9 q5 -6 10 0 t10 0"/><circle cx="74.7" cy="82.3" r="0.9" fill="#efebe5"/><rect x="102.5" y="136.1" width="12.4" height="5.4" rx="2" transform="rotate(0 102.5 136.1)"/><circle cx="149.4" cy="189.9" r="0.9" fill="#efebe5"/><circle cx="166.8" cy="343.8" r="0.9" fill="#efebe5"/><rect x="78.6" y="189.0" width="6.9" height="6.7" rx="2" transform="rotate(-25 78.6 189.0)"/><rect x="44.0" y="89.1" width="14.9" height="8.7" rx="2" transform="rotate(-5 44.0 89.1)"/><circle cx="76.2" cy="180.8" r="0.9" fill="#efebe5"/><circle cx="49.7" cy="259.5" r="0.9" fill="#efebe5"/><rect x="51.1" y="333.9" width="12.9" height="7.6" rx="2" transform="rotate(17 51.1 333.9)"/><rect x="156.1" y="31.9" width="9.8" height="8.2" rx="2" transform="rotate(-4 156.1 31.9)"/><circle cx="57.4" cy="280.9" r="2.5"/><circle cx="78.2" cy="263.5" r="0.9" fill="#efebe5"/><circle cx="178.2" cy="169.0" r="3.6"/><circle cx="170.5" cy="284.8" r="0.9" fill="#efebe5"/><circle cx="178.9" cy="85.7" r="2.9"/><circle cx="28.0" cy="335.3" r="5.8"/><circle cx="132.8" cy="223.3" r="0.9" fill="#efebe5"/><circle cx="15.6" cy="268.0" r="5.1"/><path d="M42.8 317.4 q5 -6 10 0 t10 0"/><circle cx="177.1" cy="216.1" r="0.9" fill="#efebe5"/><circle cx="128.5" cy="38.7" r="3.2"/><path d="M173.6 66.1 q5 -6 10 0 t10 0"/><circle cx="41.1" cy="207.4" r="4.1"/><path d="M183.3 96.1 q5 -6 10 0 t10 0"/><circle cx="118.6" cy="304.9" r="0.9" fill="#efebe5"/><circle cx="96.8" cy="188.7" r="5.8"/><circle cx="129.7" cy="106.1" r="2.8"/><circle cx="162.8" cy="223.3" r="3.0"/><rect x="122.8" y="319.2" width="10.9" height="8.5" rx="2" transform="rotate(13 122.8 319.2)"/><circle cx="66.7" cy="136.7" r="5.2"/><rect x="136.0" y="174.2" width="11.0" height="6.0" rx="2" transform="rotate(16 136.0 174.2)"/><path d="M35.7 160.5 q5 -6 10 0 t10 0"/><circle cx="139.9" cy="101.8" r="0.9" fill="#efebe5"/><circle cx="112.3" cy="309.3" r="0.9" fill="#efebe5"/><rect x="76.7" y="229.5" width="15.2" height="5.3" rx="2" transform="rotate(-29 76.7 229.5)"/><circle cx="109.7" cy="143.3" r="2.7"/><path d="M82.7 245.7 q5 -6 10 0 t10 0"/><rect x="134.8" y="344.1" width="9.3" height="5.9" rx="2" transform="rotate(26 134.8 344.1)"/><circle cx="137.3" cy="11.0" r="0.9" fill="#efebe5"/><circle cx="154.4" cy="339.8" r="0.9" fill="#efebe5"/><path d="M31.1 1.0 q5 -6 10 0 t10 0"/><circle cx="14.9" cy="145.0" r="4.2"/><path d="M139.6 131.1 q5 -6 10 0 t10 0"/><circle cx="151.2" cy="149.2" r="4.8"/><circle cx="36.0" cy="186.8" r="0.9" fill="#efebe5"/><circle cx="35.5" cy="125.7" r="0.9" fill="#efebe5"/><circle cx="5.6" cy="141.7" r="0.9" fill="#efebe5"/><circle cx="7.5" cy="12.0" r="5.2"/><circle cx="11.4" cy="67.3" r="5.6"/><circle cx="62.4" cy="93.9" r="3.0"/><path d="M131.9 109.2 q5 -6 10 0 t10 0"/><circle cx="54.7" cy="248.9" r="2.1"/><circle cx="43.0" cy="163.9" r="0.9" fill="#efebe5"/><path d="M175.5 133.3 q5 -6 10 0 t10 0"/><rect x="168.1" y="281.1" width="15.3" height="5.9" rx="2" transform="rotate(18 168.1 281.1)"/><rect x="135.9" y="283.9" width="12.1" height="6.6" rx="2" transform="rotate(-11 135.9 283.9)"/><circle cx="66.6" cy="269.9" r="4.0"/><circle cx="72.1" cy="55.2" r="0.9" fill="#efebe5"/><path d="M11.9 11.7 q5 -6 10 0 t10 0"/><circle cx="29.6" cy="147.2" r="6.0"/><circle cx="48.7" cy="29.0" r="3.7"/><rect x="181.9" y="335.4" width="8.3" height="7.1" rx="2" transform="rotate(7 181.9 335.4)"/><circle cx="124.0" cy="258.1" r="5.1"/><path d="M54.1 96.4 q5 -6 10 0 t10 0"/><rect x="68.6" y="254.6" width="10.4" height="5.9" rx="2" transform="rotate(-16 68.6 254.6)"/><rect x="51.8" y="313.1" width="9.3" height="7.0" rx="2" transform="rotate(30 51.8 313.1)"/><circle cx="93.3" cy="79.8" r="4.6"/><circle cx="182.3" cy="35.3" r="0.9" fill="#efebe5"/><circle cx="162.4" cy="79.7" r="0.9" fill="#efebe5"/><path d="M168.2 13.9 q5 -6 10 0 t10 0"/><rect x="42.9" y="17.4" width="15.3" height="6.9" rx="2" transform="rotate(22 42.9 17.4)"/><circle cx="82.6" cy="89.7" r="2.4"/><rect x="109.7" y="213.9" width="6.4" height="6.7" rx="2" transform="rotate(-27 109.7 213.9)"/><rect x="184.0" y="13.2" width="14.1" height="9.1" rx="2" transform="rotate(-5 184.0 13.2)"/><circle cx="68.4" cy="214.2" r="2.8"/><circle cx="146.3" cy="189.1" r="3.6"/><rect x="146.4" y="229.1" width="12.4" height="5.5" rx="2" transform="rotate(-20 146.4 229.1)"/><path d="M128.0 141.4 q5 -6 10 0 t10 0"/><circle cx="122.9" cy="144.2" r="3.2"/><circle cx="104.2" cy="123.2" r="0.9" fill="#efebe5"/><path d="M3.4 264.5 q5 -6 10 0 t10 0"/><circle cx="118.6" cy="134.8" r="0.9" fill="#efebe5"/><rect x="37.5" y="2.0" width="10.2" height="9.1" rx="2" transform="rotate(-6 37.5 2.0)"/><rect x="162.4" y="159.0" width="7.3" height="5.3" rx="2" transform="rotate(-21 162.4 159.0)"/><path d="M148.4 136.9 q5 -6 10 0 t10 0"/><path d="M135.7 59.2 q5 -6 10 0 t10 0"/><circle cx="52.1" cy="179.8" r="2.4"/><rect x="90.3" y="277.7" width="9.0" height="9.2" rx="2" transform="rotate(-27 90.3 277.7)"/><circle cx="168.0" cy="108.5" r="0.9" fill="#efebe5"/><rect x="15.9" y="245.7" width="12.4" height="9.3" rx="2" transform="rotate(7 15.9 245.7)"/><circle cx="113.1" cy="67.7" r="0.9" fill="#efebe5"/><circle cx="33.7" cy="75.3" r="0.9" fill="#efebe5"/><path d="M172.7 54.0 q5 -6 10 0 t10 0"/><rect x="22.6" y="85.2" width="6.4" height="7.8" rx="2" transform="rotate(15 22.6 85.2)"/><circle cx="7.0" cy="289.2" r="3.6"/><path d="M83.9 292.9 q5 -6 10 0 t10 0"/><rect x="119.4" y="106.3" width="10.3" height="8.3" rx="2" transform="rotate(-3 119.4 106.3)"/><circle cx="80.7" cy="8.1" r="0.9" fill="#efebe5"/><circle cx="85.6" cy="154.2" r="0.9" fill="#efebe5"/><circle cx="153.9" cy="279.6" r="0.9" fill="#efebe5"/><circle cx="19.7" cy="44.3" r="0.9" fill="#efebe5"/><circle cx="67.2" cy="276.8" r="2.2"/><path d="M24.0 318.1 q5 -6 10 0 t10 0"/><circle cx="143.1" cy="176.5" r="5.0"/><rect x="164.7" y="225.2" width="6.3" height="5.3" rx="2" transform="rotate(7 164.7 225.2)"/><rect x="127.4" y="37.8" width="15.8" height="7.5" rx="2" transform="rotate(27 127.4 37.8)"/><rect x="168.6" y="57.0" width="6.7" height="6.8" rx="2" transform="rotate(15 168.6 57.0)"/><path d="M29.2 309.3 q5 -6 10 0 t10 0"/><path d="M166.5 157.5 q5 -6 10 0 t10 0"/><rect x="92.4" y="317.4" width="11.9" height="8.1" rx="2" transform="rotate(-16 92.4 317.4)"/><circle cx="68.5" cy="68.6" r="0.9" fill="#efebe5"/><path d="M29.7 323.1 q5 -6 10 0 t10 0"/><path d="M164.8 58.2 q5 -6 10 0 t10 0"/><path d="M21.2 183.1 q5 -6 10 0 t10 0"/></g></svg>
<div class="a" style="left:807.30px;top:78.70px;width:184.10px;height:46.10px;background:#008069;border-radius:22px 22px 0 0"></div>
<svg class="a" style="left:839.50px;top:78.20px;" width="120.00" height="15.40" viewBox="0 0 120.00 15.40"><path d="M0 0 H120 Q111.5 0 111.5 7 Q111.5 15.4 101 15.4 H19 Q8.5 15.4 8.5 7 Q8.5 0 0 0 Z" fill="#000"/></svg>
<div class="a" style="left:886.90px;top:82.30px;width:25.00px;height:2.80px;background:#1c1c1c;border-radius:2px"></div>
<div class="a" style="left:920.50px;top:82.00px;width:3.00px;height:3.00px;background:radial-gradient(circle,#3a5aa8 0,#1a2850 60%,#000 100%);border-radius:50%"></div>
<div class="t" style="left:822.80px;top:85.22px;font-size:7.070px;color:#fff;font-weight:400;">15:42</div>
<svg class="a" style="left:960.80px;top:83.80px;" width="9.40" height="7.40" viewBox="0 0 9.40 7.40"><g stroke="#fff" stroke-width="0.9" fill="none"><path d="M0.6 2.6 Q4.7 -0.9 8.8 2.6"/><path d="M2.0 4.0 Q4.7 1.6 7.4 4.0"/><path d="M3.3 5.3 Q4.7 4.1 6.1 5.3"/></g><circle cx="4.7" cy="6.6" r="0.8" fill="#fff"/></svg>
<svg class="a" style="left:974.40px;top:85.80px;" width="9.80" height="5.20" viewBox="0 0 9.80 5.20"><rect x="0.5" y="0.5" width="8.2" height="4.2" fill="none" stroke="#fff" stroke-width="1"/><rect x="1.5" y="1.5" width="4.6" height="2.2" fill="#fff"/><rect x="8.8" y="1.6" width="0.9" height="2" fill="#fff"/></svg>
<div class="a" style="left:951.40px;top:89.60px;width:1.00px;height:1.00px;background:#8fcabd"></div>
<div class="a" style="left:953.40px;top:89.60px;width:1.00px;height:1.00px;background:#8fcabd"></div>
<div class="a" style="left:955.40px;top:89.60px;width:1.00px;height:1.00px;background:#8fcabd"></div>
<svg class="a" style="left:810.00px;top:106.30px;" width="9.50" height="8.70" viewBox="0 0 9.50 8.70"><path d="M8.9 4.35 H1.3 M4.8 0.8 L1.2 4.35 L4.8 7.9" stroke="#fff" stroke-width="1.3" fill="none"/></svg>
<svg class="a" style="left:825.30px;top:101.30px;" width="17.60" height="17.60" viewBox="0 0 17.60 17.60"><defs><clipPath id="cp"><circle cx="8.8" cy="8.8" r="8.8"/></clipPath></defs><circle cx="8.8" cy="8.8" r="8.8" fill="#cfd6dc"/><g clip-path="url(#cp)"><circle cx="8.8" cy="7.6" r="3.7" fill="#fff"/><ellipse cx="8.8" cy="17.6" rx="8" ry="5.2" fill="#fff"/></g></svg>
<div class="t" style="left:850.40px;top:106.74px;font-size:9.018px;color:#fff;font-weight:400;transform:scaleX(0.9259);transform-origin:0 0;-webkit-text-stroke:0.1px #fff">+41 58 700 ** 11</div>
<svg class="a" style="left:948.00px;top:107.40px;" width="10.50" height="6.60" viewBox="0 0 10.50 6.60"><rect x="0" y="0.3" width="6.8" height="6" rx="1" fill="#fff"/><path d="M7.2 3.3 L10.4 0.6 V6 Z" fill="#fff"/></svg>
<svg class="a" style="left:963.40px;top:106.00px;" width="9.60" height="9.20" viewBox="0 0 9.60 9.20"><path d="M1.2 1.0 Q2.2 0 3.2 0.8 L4.2 2.6 Q4.5 3.4 3.6 4.0 Q4.6 6.0 6.0 6.7 Q6.6 5.8 7.4 6.1 L9.0 7.1 Q9.6 8.0 8.6 8.9 Q6.8 10.0 3.8 7.0 Q0 3.2 1.2 1.0 Z" fill="#fff"/></svg>
<div class="a" style="left:982.80px;top:106.60px;width:1.80px;height:1.80px;background:#fff;border-radius:50%"></div>
<div class="a" style="left:982.80px;top:109.90px;width:1.80px;height:1.80px;background:#fff;border-radius:50%"></div>
<div class="a" style="left:982.80px;top:113.20px;width:1.80px;height:1.80px;background:#fff;border-radius:50%"></div>
<div class="a" style="left:815.90px;top:137.00px;width:123.90px;height:76.80px;background:#fff;border-radius:0 4px 4px 4px"></div>
<svg class="a" style="left:812.30px;top:137.00px;" width="4.10" height="4.00" viewBox="0 0 4.10 4.00"><path d="M0 0 H4.1 V3.8 Z" fill="#fff"/></svg>
<div class="t" style="left:822.90px;top:144.06px;font-size:7.374px;color:#262626;font-weight:400;transform:scaleX(0.9615);transform-origin:0 0;-webkit-text-stroke:0.1px #262626">Hello Mary</div>
<div class="t" style="left:822.90px;top:152.04px;font-size:7.426px;color:#262626;font-weight:400;transform:scaleX(0.9615);transform-origin:0 0;-webkit-text-stroke:0.1px #262626">Please copy our promotional code</div>
<div class="t" style="left:822.90px;top:169.10px;font-size:7.290px;color:#262626;font-weight:400;transform:scaleX(0.9615);transform-origin:0 0;-webkit-text-stroke:0.1px #262626">Acme Ltd</div>
<div class="a" style="left:822.30px;top:181.90px;width:111.20px;height:15.10px;background:#ececec"></div>
<div class="t" style="left:822.30px;top:186.70px;font-size:7.100px;color:#3a87c9;font-weight:400;width:111.2px;text-align:center">Copy offer code</div>
<div class="t" style="left:919.00px;top:200.57px;font-size:6.350px;color:#3a3a3a;font-weight:400;transform:scaleX(0.8929);transform-origin:0 0;">15:42</div>
<div class="a" style="left:943.10px;top:168.40px;width:13.20px;height:13.20px;background:#d7d2cb;border-radius:50%"></div>
<svg class="a" style="left:945.50px;top:171.00px;" width="8.50" height="8.00" viewBox="0 0 8.50 8.00"><path d="M1 7.5 Q1.5 3 6 3 V0.8 L8.2 3.8 L6 6.8 V4.6 Q2.8 4.6 1 7.5 Z" fill="#fff"/></svg>
<div class="a" style="left:813.60px;top:452.10px;width:144.00px;height:25.90px;background:#fff;border-radius:12px"></div>
<svg class="a" style="left:819.40px;top:457.50px;" width="12.00" height="12.00" viewBox="0 0 12.00 12.00"><circle cx="6" cy="6" r="5" fill="none" stroke="#8796a0" stroke-width="1.2"/><circle cx="4.2" cy="4.6" r="0.8" fill="#8796a0"/><circle cx="7.8" cy="4.6" r="0.8" fill="#8796a0"/><path d="M3.2 6.8 Q6 9.8 8.8 6.8" stroke="#8796a0" stroke-width="1.1" fill="none"/></svg>
<div class="t" style="left:834.70px;top:460.86px;font-size:7.790px;color:#8a8f93;font-weight:400;font-style:italic">Message</div>
<svg class="a" style="left:926.20px;top:456.50px;" width="11.20" height="12.50" viewBox="0 0 11.20 12.50"><path d="M9.6 3.5 L4.0 9.6 Q2.2 11.4 1.2 10.2 Q0.2 9 2 7.2 L7.4 1.6 Q8.6 0.6 9.4 1.4 Q10.2 2.4 9 3.6 L4 9 Q3.2 9.8 2.8 9.3" stroke="#8796a0" stroke-width="1.1" fill="none"/></svg>
<svg class="a" style="left:940.80px;top:457.00px;" width="12.20" height="12.00" viewBox="0 0 12.20 12.00"><rect x="0.4" y="3" width="11.4" height="8" rx="1.4" fill="#8796a0"/><rect x="3.8" y="1" width="4.6" height="2.5" fill="#8796a0"/><circle cx="6.1" cy="7" r="2.5" fill="#fff"/><circle cx="6.1" cy="7" r="1.6" fill="#8796a0"/></svg>
<div class="a" style="left:961.90px;top:451.50px;width:23.60px;height:23.60px;background:#008069;border-radius:50%"></div>
<svg class="a" style="left:968.00px;top:456.00px;" width="11.50" height="14.00" viewBox="0 0 11.50 14.00"><rect x="3.8" y="1" width="4" height="7" rx="2" fill="#fff"/><path d="M1.8 6.2 Q1.8 10.2 5.8 10.2 Q9.8 10.2 9.8 6.2 M5.8 10.2 V13" stroke="#fff" stroke-width="1.1" fill="none"/></svg>
<div class="a" style="left:137.00px;top:469.00px;width:885.00px;height:34.00px;background:#f0f0f0"></div>
<div class="a" style="left:137.00px;top:502.60px;width:885.00px;height:0.40px;background:#dedede"></div>
<div class="a" style="left:146.00px;top:477.00px;width:47.00px;height:17.00px;background:#0a6fbd"></div>
<div class="t" style="left:155.40px;top:481.05px;font-size:9.395px;color:#fff;font-weight:400;transform:scaleX(0.8696);transform-origin:0 0;-webkit-text-stroke:0.12px #fff">Next</div>
<svg class="a" style="left:176.30px;top:483.00px;" width="6.70" height="9.30" viewBox="0 0 6.70 9.30"><path d="M0.8 0.6 L5.2 4.65 L0.8 8.7" stroke="#fff" stroke-width="1.3" fill="none"/></svg>
<div class="a" style="left:195.50px;top:477.00px;width:63.25px;height:17.20px;background:#f5f5f5"></div>
<svg class="a" style="left:206.30px;top:482.60px;" width="6.20" height="9.40" viewBox="0 0 6.20 9.40"><path d="M5.4 0.6 L1 4.7 L5.4 8.8" stroke="#c3c3c3" stroke-width="1.2" fill="none"/></svg>
<div class="t" style="left:216.70px;top:480.99px;font-size:9.522px;color:#c4c4c4;font-weight:400;transform:scaleX(0.8696);transform-origin:0 0;">Previous</div>
<div class="a" style="left:259.90px;top:476.80px;width:68.00px;height:17.20px;background:#0a6fbd"></div>
<div class="t" style="left:269.70px;top:480.99px;font-size:9.522px;color:#fff;font-weight:400;transform:scaleX(0.8696);transform-origin:0 0;-webkit-text-stroke:0.12px #fff">Save as draft</div>
<div class="a" style="left:330.20px;top:476.80px;width:43.40px;height:17.20px;background:#c9c9c9"></div>
<div class="t" style="left:339.40px;top:481.67px;font-size:9.165px;color:#333;font-weight:400;transform:scaleX(0.8696);transform-origin:0 0;-webkit-text-stroke:0.1px #333">Cancel</div>
<div class="a" style="left:1022.00px;top:0.00px;width:2.00px;height:54.00px;background:#e3e3e3"></div>
<div class="a" style="left:1022.00px;top:54.00px;width:2.00px;height:327.00px;background:#5a5a5a"></div>
<div class="a" style="left:1022.00px;top:381.00px;width:2.00px;height:123.00px;background:#e8e8e8"></div>
</body></html>
